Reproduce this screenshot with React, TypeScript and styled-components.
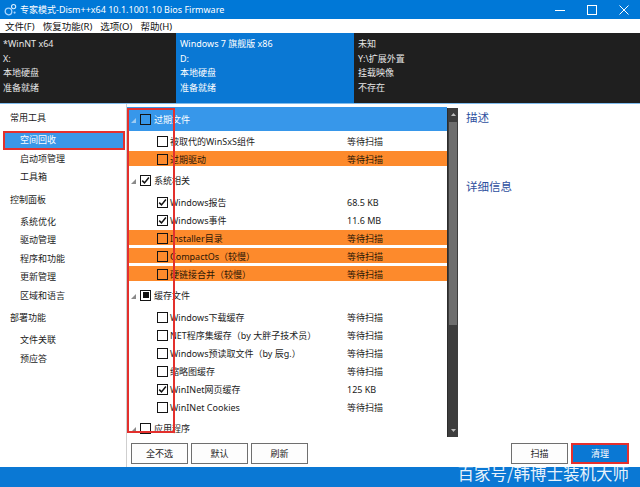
import React from "react";
import styled, { createGlobalStyle, css } from "styled-components";

type CheckState = "off" | "on" | "mixed";

type TreeItem = {
  label: string;
  status: string;
  checked?: boolean;
  warn?: boolean;
};

type TreeGroup = {
  label: string;
  state: CheckState;
  selected?: boolean;
  items: TreeItem[];
};

const menus = ["文件(F)", "恢复功能(R)", "选项(O)", "帮助(H)"];

const systems = [
  { width: 176, active: false, lines: ["*WinNT x64", "X:", "本地硬盘", "准备就绪"] },
  { width: 178, active: true, lines: ["Windows 7 旗舰版 x86", "D:", "本地硬盘", "准备就绪"] },
  { width: 0, active: false, lines: ["未知", "Y:\\扩展外置", "挂载映像", "不存在"] },
];

const navSections = [
  { title: "常用工具", items: ["空间回收", "启动项管理", "工具箱"] },
  { title: "控制面板", items: ["系统优化", "驱动管理", "程序和功能", "更新管理", "区域和语言"] },
  { title: "部署功能", items: ["文件关联", "预应答"] },
];

const groups: TreeGroup[] = [
  {
    label: "过期文件",
    state: "off",
    selected: true,
    items: [
      { label: "被取代的WinSxS组件", status: "等待扫描" },
      { label: "过期驱动", status: "等待扫描", warn: true },
    ],
  },
  {
    label: "系统相关",
    state: "on",
    items: [
      { label: "Windows报告", status: "68.5 KB", checked: true },
      { label: "Windows事件", status: "11.6 MB", checked: true },
      { label: "Installer目录", status: "等待扫描", warn: true },
      { label: "CompactOs（较慢）", status: "等待扫描", warn: true },
      { label: "硬链接合并（较慢）", status: "等待扫描", warn: true },
    ],
  },
  {
    label: "缓存文件",
    state: "mixed",
    items: [
      { label: "Windows下载缓存", status: "等待扫描" },
      { label: "NET程序集缓存（by 大胖子技术员）", status: "等待扫描" },
      { label: "Windows预读取文件（by 辰g.）", status: "等待扫描" },
      { label: "缩略图缓存", status: "等待扫描" },
      { label: "WinINet网页缓存", status: "125 KB", checked: true },
      { label: "WinINet Cookies", status: "等待扫描" },
    ],
  },
  { label: "应用程序", state: "off", items: [] },
];

function CheckBox({ state }: { state: CheckState }) {
  return (
    <Box>
      {state === "on" && (
        <svg width="9" height="9" viewBox="0 0 9 9">
          <path d="M1.2 4.6 L3.5 6.9 L7.9 1.6" fill="none" stroke="#111" strokeWidth="1.5" />
        </svg>
      )}
      {state === "mixed" && <MixedMark />}
    </Box>
  );
}

function Expander({ light }: { light?: boolean }) {
  return (
    <ExpanderIcon width="5" height="5" viewBox="0 0 5 5">
      <polygon points="5,0 5,5 0,5" fill={light ? "#9ccbf2" : "#8a8a8a"} />
    </ExpanderIcon>
  );
}

export default function App() {
  return (
    <>
      <GlobalStyle />
      <Window>
        <TitleBar>
          <svg width="13" height="13" viewBox="0 0 13 13">
            <circle cx="4.5" cy="8.5" r="3.3" fill="none" stroke="#a9d6ff" strokeWidth="1.3" />
            <circle cx="9.6" cy="3.6" r="2.1" fill="none" stroke="#d8eeff" strokeWidth="1.1" />
            <circle cx="10.6" cy="9.6" r="1.1" fill="#a9d6ff" />
          </svg>
          <Title>专家模式-Dism++x64 10.1.1001.10 Bios Firmware</Title>
          <Controls>
            <ControlButton>
              <svg width="10" height="10" viewBox="0 0 10 10">
                <path d="M0 5.5 H10" stroke="#fff" strokeWidth="1" />
              </svg>
            </ControlButton>
            <ControlButton>
              <svg width="10" height="10" viewBox="0 0 10 10">
                <rect x="0.5" y="0.5" width="9" height="9" fill="none" stroke="#fff" strokeWidth="1" />
              </svg>
            </ControlButton>
            <ControlButton>
              <svg width="10" height="10" viewBox="0 0 10 10">
                <path d="M0.5 0.5 L9.5 9.5 M9.5 0.5 L0.5 9.5" stroke="#fff" strokeWidth="1" />
              </svg>
            </ControlButton>
          </Controls>
        </TitleBar>

        <MenuBar>
          {menus.map((m) => (
            <MenuItem key={m}>{m}</MenuItem>
          ))}
        </MenuBar>

        <InfoPanel>
          {systems.map((s, i) => (
            <InfoColumn key={i} $width={s.width} $active={s.active}>
              {s.lines.map((l) => (
                <InfoLine key={l}>{l}</InfoLine>
              ))}
            </InfoColumn>
          ))}
        </InfoPanel>

        <Main>
          <Sidebar>
            {navSections.map((sec) => (
              <NavSection key={sec.title}>
                <NavHeader>{sec.title}</NavHeader>
                {sec.items.map((it) => (
                  <NavItem key={it} $selected={it === "空间回收"}>
                    {it}
                  </NavItem>
                ))}
              </NavSection>
            ))}
          </Sidebar>

          <Workspace>
            <Panes>
              <TreeView>
                {groups.map((g) => (
                  <React.Fragment key={g.label}>
                    <GroupRow $selected={g.selected}>
                      <Expander light={g.selected} />
                      <CheckBox state={g.state} />
                      <GroupLabel $selected={g.selected}>{g.label}</GroupLabel>
                    </GroupRow>
                    {g.items.map((it) => (
                      <ItemRow key={it.label} $warn={it.warn}>
                        <ItemName>
                          <CheckBox state={it.checked ? "on" : "off"} />
                          <span>{it.label}</span>
                        </ItemName>
                        <span>{it.status}</span>
                      </ItemRow>
                    ))}
                  </React.Fragment>
                ))}
                <Annotation />
              </TreeView>

              <ScrollBar>
                <ScrollArrow>
                  <svg width="5" height="3" viewBox="0 0 5 3">
                    <polygon points="0,3 2.5,0 5,3" fill="#bdbdbd" />
                  </svg>
                </ScrollArrow>
                <ScrollThumb />
                <ScrollTrack />
                <ScrollArrow>
                  <svg width="5" height="3" viewBox="0 0 5 3">
                    <polygon points="0,0 5,0 2.5,3" fill="#bdbdbd" />
                  </svg>
                </ScrollArrow>
              </ScrollBar>

              <DetailPane>
                <DetailTitle>描述</DetailTitle>
                <DetailTitle $gap>详细信息</DetailTitle>
              </DetailPane>
            </Panes>

            <ButtonBar>
              <Button>全不选</Button>
              <Button>默认</Button>
              <Button>刷新</Button>
              <Spacer />
              <Button>扫描</Button>
              <Button $primary>清理</Button>
            </ButtonBar>
          </Workspace>
        </Main>

        <StatusBar>
          <Watermark>百家号/韩博士装机大师</Watermark>
        </StatusBar>
      </Window>
    </>
  );
}

const GlobalStyle = createGlobalStyle`
  html, body {
    margin: 0;
    padding: 0;
    background: #fff;
  }
  body {
    font-family: "Noto Sans", "Noto Sans CJK SC", sans-serif;
    font-size: 9px;
    color: #1b1b1b;
  }
  * {
    box-sizing: border-box;
  }
`;

const Window = styled.div`
  width: 640px;
  height: 487px;
  display: flex;
  flex-direction: column;
  overflow: hidden;
  position: relative;
`;

const TitleBar = styled.header`
  height: 19px;
  background: #0078d7;
  color: #fff;
  display: flex;
  align-items: center;
  padding-left: 4px;
`;

const Title = styled.span`
  margin-left: 3px;
  font-size: 9px;
  white-space: nowrap;
`;

const Controls = styled.div`
  margin-left: auto;
  display: flex;
  height: 100%;
`;

const ControlButton = styled.div`
  width: 32px;
  height: 100%;
  display: flex;
  align-items: center;
  justify-content: center;
`;

const MenuBar = styled.nav`
  height: 14px;
  background: #fff;
  display: flex;
  align-items: center;
  gap: 8px;
  padding-left: 5px;
`;

const MenuItem = styled.span`
  font-size: 9.5px;
  white-space: nowrap;
  color: #111;
`;

const InfoPanel = styled.section`
  height: 71px;
  display: flex;
  background: #1f1f1f;
  border-bottom: 1px solid #7fbcee;
`;

const InfoColumn = styled.div<{ $width: number; $active: boolean }>`
  ${(p) => (p.$width ? `width: ${p.$width}px;` : "flex: 1;")}
  padding: 4px 0 0 ${(p) => (p.$width === 176 ? 3 : 4)}px;
  background: ${(p) => (p.$active ? "#0a78d4" : "transparent")};
  color: ${(p) => (p.$active ? "#fff" : "#e6e6e6")};
`;

const InfoLine = styled.div`
  line-height: 14.5px;
  white-space: nowrap;
`;

const Main = styled.div`
  flex: 1;
  display: flex;
  min-height: 0;
`;

const Sidebar = styled.aside`
  width: 127px;
  border-right: 1px solid #cfcfcf;
  padding-top: 2px;
`;

const NavSection = styled.div`
  & + & {
    margin-top: 1px;
  }
`;

const NavHeader = styled.div`
  height: 24px;
  line-height: 24px;
  padding-left: 10px;
  margin-bottom: 1px;
`;

const NavItem = styled.div<{ $selected?: boolean }>`
  height: 18.5px;
  line-height: 18.5px;
  margin: 0 1px 0 3px;
  padding-left: 17px;
  ${(p) =>
    p.$selected &&
    css`
      background: #3a97e8;
      color: #fff;
      outline: 2px solid #e5302e;
      outline-offset: -2px;
    `}
`;

const Workspace = styled.div`
  flex: 1;
  display: flex;
  flex-direction: column;
`;

const Panes = styled.div`
  height: 333px;
  display: flex;
`;

const TreeView = styled.div`
  width: 320px;
  padding-top: 3px;
  overflow: hidden;
  position: relative;
`;

const GroupRow = styled.div<{ $selected?: boolean }>`
  height: 24px;
  margin-bottom: 1px;
  display: flex;
  align-items: center;
  padding-left: 4px;
  background: ${(p) => (p.$selected ? "#3797ea" : "transparent")};
`;

const ExpanderIcon = styled.svg`
  margin-right: 4px;
  margin-top: 2px;
`;

const GroupLabel = styled.span<{ $selected?: boolean }>`
  margin-left: 3px;
  color: ${(p) => (p.$selected ? "#fff" : "#1b1b1b")};
`;

const ItemRow = styled.div<{ $warn?: boolean }>`
  height: 18px;
  display: grid;
  grid-template-columns: 220px 1fr;
  align-items: center;
  ${(p) =>
    p.$warn &&
    css`
      background: linear-gradient(#fd8a2c, #fd8a2c) 0 1px / 100% 15px no-repeat;
      color: #2a1606;
    `}
`;

const ItemName = styled.div`
  display: flex;
  align-items: center;
  gap: 2px;
  padding-left: 30px;
  white-space: nowrap;
`;

const Box = styled.span`
  width: 11px;
  height: 11px;
  flex: none;
  border: 1.5px solid #141414;
  display: inline-flex;
  align-items: center;
  justify-content: center;
`;

const MixedMark = styled.span`
  width: 6px;
  height: 6px;
  background: #111;
`;

const Annotation = styled.div`
  position: absolute;
  left: 0;
  top: 4px;
  width: 48px;
  height: 325px;
  border: 2px solid #e3302d;
  pointer-events: none;
`;

const ScrollBar = styled.div`
  width: 11px;
  margin-top: 4px;
  background: #3d3d3d;
  border-left: 1px solid #2c2c2c;
  display: flex;
  flex-direction: column;
`;

const ScrollArrow = styled.div`
  height: 13px;
  display: flex;
  align-items: center;
  justify-content: center;
`;

const ScrollThumb = styled.div`
  height: 203px;
  margin: 1px 1px 0;
  background: #6e6e6e;
`;

const ScrollTrack = styled.div`
  flex: 1;
`;

const DetailPane = styled.div`
  flex: 1;
  padding: 7px 8px;
`;

const DetailTitle = styled.div<{ $gap?: boolean }>`
  font-size: 11.5px;
  line-height: 14px;
  color: #2e4f9e;
  margin-top: ${(p) => (p.$gap ? "55px" : "0")};
`;

const ButtonBar = styled.div`
  flex: 1;
  display: flex;
  align-items: flex-start;
  gap: 3px;
  padding: 6px 11px 0 4px;
`;

const Spacer = styled.div`
  flex: 1;
`;

const Button = styled.button<{ $primary?: boolean }>`
  width: ${(p) => (p.$primary ? 58 : 57)}px;
  height: 21px;
  font: inherit;
  font-size: 9px;
  padding: 0;
  border: 1px solid #6f6f6f;
  background: #fdfdfd;
  color: #1b1b1b;
  ${(p) =>
    p.$primary &&
    css`
      background: #0a78d4;
      color: #fff;
      border-color: #0a78d4;
      outline: 2px solid #e5302e;
      outline-offset: -2px;
    `}
`;

const StatusBar = styled.footer`
  height: 20px;
  background: #0a78d4;
  position: relative;
`;

const Watermark = styled.div`
  position: absolute;
  right: 11px;
  top: -2px;
  font-family: "Noto Sans CJK SC", sans-serif;
  font-size: 16.5px;
  line-height: 17px;
  color: rgba(255, 255, 255, 0.92);
  white-space: nowrap;
`;
